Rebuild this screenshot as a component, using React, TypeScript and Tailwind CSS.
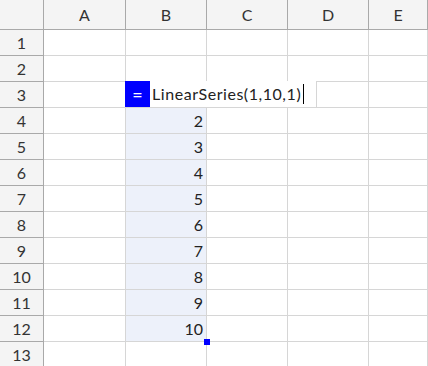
const COLS = ["A", "B", "C", "D", "E"];
const ROWS = Array.from({ length: 13 }, (_, i) => i + 1);

const colWidth = (i: number) =>
  i === 0 ? "w-[82px]" : i === 4 ? "flex-1" : "w-[81px]";

const cellValue = (row: number, col: number) =>
  col === 1 && row >= 4 && row <= 12 ? String(row - 2) : "";

export default function App() {
  return (
    <div
      className="relative h-[366px] w-[428px] overflow-hidden bg-white text-[16px] text-[#222]"
      style={{ fontFamily: "Lato, 'Noto Sans', sans-serif" }}
    >
      {/* column header */}
      <div className="flex h-[30px] border-b border-[#a9a9a9] bg-[#f4f4f4]">
        <div className="w-[44px] shrink-0 border-r border-[#a9a9a9]" />
        {COLS.map((c, i) => (
          <div
            key={c}
            className={`${colWidth(i)} flex shrink-0 items-center justify-center border-r border-[#a9a9a9] text-[#333]`}
          >
            {c}
          </div>
        ))}
      </div>

      {ROWS.map((r) => (
        <div key={r} className="flex h-[26px]">
          <div className="flex w-[44px] shrink-0 items-center justify-center border-r border-b border-[#a9a9a9] bg-[#f4f4f4] text-[#333]">
            {r}
          </div>
          {COLS.map((c, i) => {
            const selected = i === 1 && r >= 4 && r <= 12;
            return (
              <div
                key={c}
                className={`${colWidth(i)} flex shrink-0 items-center justify-end border-r border-b border-[#d6d6d6] pr-[3px] ${
                  selected ? "bg-[#edf1fa]" : ""
                }`}
              >
                {cellValue(r, i)}
              </div>
            );
          })}
        </div>
      ))}

      {/* cell editor over B3 */}
      <div className="absolute left-[125px] top-[81px] flex h-[26px] w-[192px] items-center border-r border-[#d6d6d6] bg-white">
        <div className="flex h-full w-[25px] shrink-0 items-center justify-center bg-[#0000ff] text-[18px] text-white">
          =
        </div>
        <span className="ml-[2px] w-[151px] shrink-0 whitespace-nowrap tracking-[0.55px]">
          LinearSeries(1,10,1)
        </span>
        <span className="h-[20px] w-px shrink-0 bg-black" />
      </div>

      {/* fill handle */}
      <div className="absolute left-[204px] top-[339px] h-[6px] w-[6px] bg-[#0000ff]" />
    </div>
  );
}
